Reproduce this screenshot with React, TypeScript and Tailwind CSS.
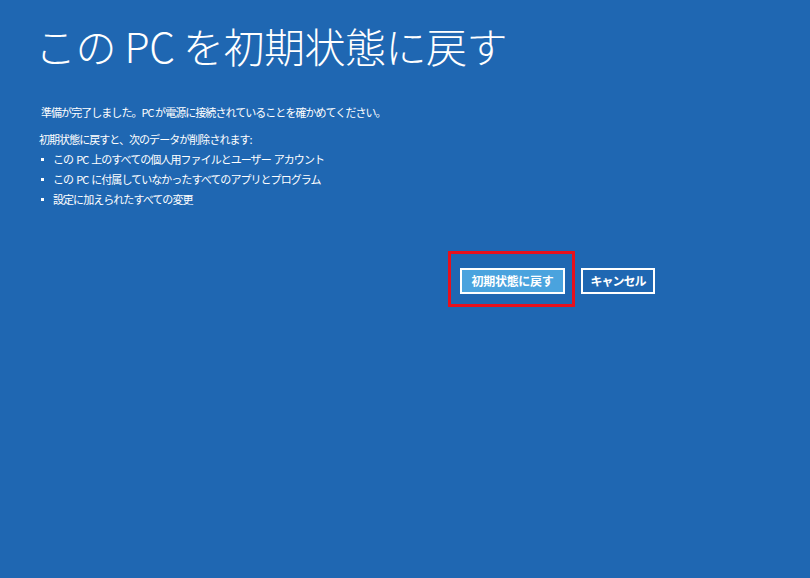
export default function App() {
  return (
    <div className="w-[810px] h-[578px] bg-[#1f67b2] text-white font-['Noto_Sans_CJK_JP','Noto_Sans',sans-serif] overflow-hidden">
      <h1 className="pt-[23px] pl-[35px] text-[41px] leading-[1.1] font-light tracking-[-0.5px] whitespace-pre">
        この PC を初期状態に戻す
      </h1>

      <div className="mt-[36px] pl-[41px] text-[11px] leading-[16px] tracking-[-0.95px]">
        <p>準備が完了しました。PC が電源に接続されていることを確かめてください。</p>
      </div>

      <div className="mt-[11px] pl-[39px] text-[11px] leading-[16px] tracking-[-0.95px]">
        <p>初期状態に戻すと、次のデータが削除されます:</p>
        <ul className="mt-[4px] flex flex-col gap-[4px]">
          {[
            'この PC 上のすべての個人用ファイルとユーザー アカウント',
            'この PC に付属していなかったすべてのアプリとプログラム',
            '設定に加えられたすべての変更',
          ].map((item) => (
            <li key={item} className="flex items-center">
              <span className="w-[3px] h-[3px] bg-white ml-[2px] mr-[9px]" />
              <span className="whitespace-pre">{item.replace(/ /g, '  ')}</span>
            </li>
          ))}
        </ul>
      </div>

      <div className="mt-[44px] pl-[448px] flex items-start">
        <div className="border-[3px] border-[#e8101c] pt-[14px] pb-[10px] pl-[9px] pr-[7px]">
          <button className="w-[105px] h-[26px] border-2 border-white bg-[#4aa3de] text-[12px] font-bold tracking-[-0.3px] flex items-center justify-center">
            初期状態に戻す
          </button>
        </div>
        <button className="ml-[6px] mt-[17px] w-[74px] h-[26px] border-2 border-white text-[12px] font-bold tracking-[-1px] flex items-center justify-center">
          キャンセル
        </button>
      </div>
    </div>
  )
}
